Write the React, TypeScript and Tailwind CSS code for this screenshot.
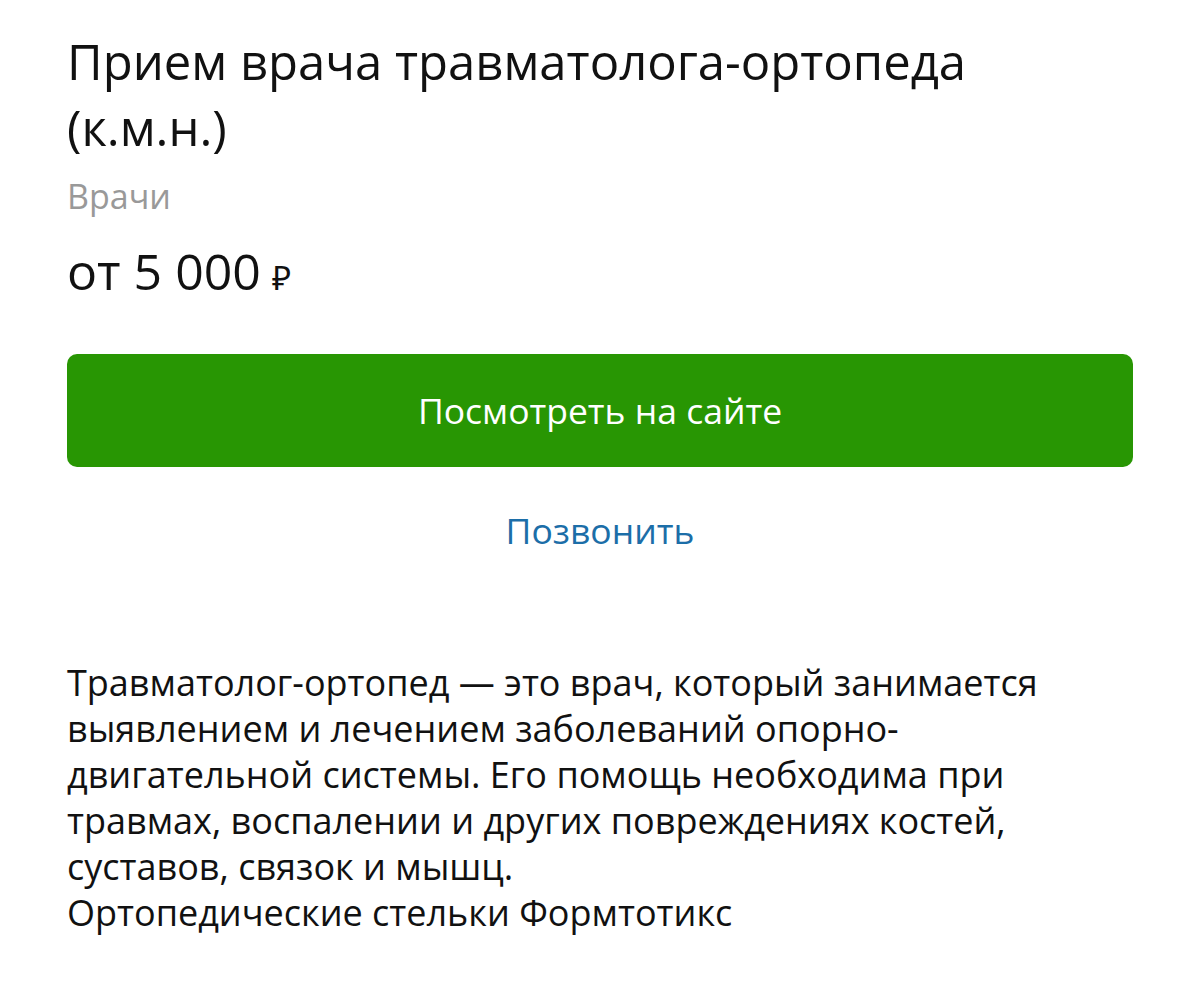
export default function App() {
  return (
    <div
      className="w-[1200px] h-[998px] bg-white text-black overflow-hidden"
      style={{ fontFamily: '"Open Sans", "Noto Sans", sans-serif' }}
    >
      <div className="flex flex-col px-[67px] pt-[28px]">
        <h1 className="text-[49px] leading-[66px] font-normal text-[#111]">
          Прием врача травматолога-ортопеда (к.м.н.)
        </h1>
        <div className="mt-[14px] text-[34px] leading-[44px] text-[#999]">Врачи</div>
        <div className="mt-[23px] text-[50px] leading-[60px] text-[#111] flex items-baseline gap-[11px]">
          <span>от 5 000</span>
          <span className="text-[33px]">₽</span>
        </div>

        <button className="mt-[46px] h-[113px] w-full rounded-[10px] bg-[#289603] text-white text-[35.5px] flex items-center justify-center">
          Посмотреть на сайте
        </button>

        <div className="mt-[37px] text-center text-[35.5px] leading-[52px] text-[#1c6ea8]">Позвонить</div>

        <p className="mt-[104px] text-[36px] leading-[46px] text-[#111]">
          Травматолог-ортопед — это врач, который занимается
          <br />
          выявлением и лечением заболеваний опорно-
          <br />
          двигательной системы. Его помощь необходима при
          <br />
          травмах, воспалении и других повреждениях костей,
          <br />
          суставов, связок и мышц.
          <br />
          Ортопедические стельки Формтотикс
        </p>
      </div>
    </div>
  );
}
